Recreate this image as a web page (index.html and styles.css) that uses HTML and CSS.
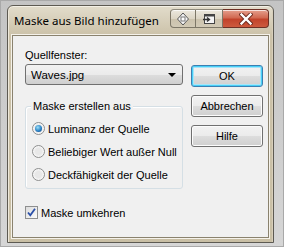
FILE: index.html
```html
<!DOCTYPE html>
<html lang="de">
<head>
  <meta charset="UTF-8" />
  <title>Maske aus Bild hinzufügen</title>
  <link rel="stylesheet" href="styles.css">
</head>
<body>
  <div class="window">
    <div class="titlebar">
      <span class="title">Maske aus Bild hinzufügen</span>
      <div class="caption-buttons">
        <div class="cap-btn cap-move">
          <svg width="14" height="14" viewBox="0 0 14 14">
            <path d="M7 1 L12.5 7 L7 13 L1.5 7 Z" fill="#f4f4f4" stroke="#555" stroke-width="1"/>
            <rect x="5" y="5" width="4" height="4" fill="#fff" stroke="#777" stroke-width="1"/>
          </svg>
        </div>
        <div class="cap-btn cap-roll">
          <svg width="14" height="12" viewBox="0 0 14 12">
            <rect x="2.5" y="1.5" width="10" height="9" fill="#f4f4f4" stroke="#444" stroke-width="1"/>
            <rect x="2.5" y="1.5" width="10" height="2" fill="#444"/>
            <path d="M1 6.5 H7 M5 4.5 L7.5 6.5 L5 8.5" fill="none" stroke="#333" stroke-width="1.3"/>
          </svg>
        </div>
        <div class="cap-btn cap-close">
          <svg width="14" height="12" viewBox="0 0 14 12">
            <path d="M2.5 1.5 L11.5 10.5 M11.5 1.5 L2.5 10.5" stroke="#6b2a1e" stroke-width="4.2" stroke-linecap="square"/>
            <path d="M2.5 1.5 L11.5 10.5 M11.5 1.5 L2.5 10.5" stroke="#fff" stroke-width="2.4" stroke-linecap="square"/>
          </svg>
        </div>
      </div>
    </div>

    <div class="client">
      <div class="main">
        <div class="left-col">
          <div class="field-label">Quellfenster:</div>
          <div class="select">
            <span>Waves.jpg</span>
            <span class="select-arrow"></span>
          </div>

          <div class="group">
            <div class="group-legend">Maske erstellen aus</div>
            <div class="option">
              <span class="radio checked"></span>
              <span>Luminanz der Quelle</span>
            </div>
            <div class="option">
              <span class="radio"></span>
              <span>Beliebiger Wert außer Null</span>
            </div>
            <div class="option">
              <span class="radio"></span>
              <span>Deckfähigkeit der Quelle</span>
            </div>
          </div>
        </div>

        <div class="btn-col">
          <div class="btn btn-default">OK</div>
          <div class="btn">Abbrechen</div>
          <div class="btn">Hilfe</div>
        </div>
      </div>

      <div class="check-row">
        <span class="checkbox">
          <svg width="9" height="9" viewBox="0 0 9 9">
            <path d="M1 4.5 L3.3 7.3 L8 0.8" fill="none" stroke="#2a4fa8" stroke-width="1.8"/>
          </svg>
        </span>
        <span>Maske umkehren</span>
      </div>
    </div>
  </div>
</body>
</html>
```

FILE: styles.css
```css
html, body {
  margin: 0;
  padding: 0;
}

body {
  width: 284px;
  height: 247px;
  box-sizing: border-box;
  background: linear-gradient(#c4c4c4, #d6d6d6);
  border: 1px solid #a9a9a9;
  padding: 4px 9px 3px 6px;
  font-family: "Liberation Sans", Tahoma, sans-serif;
  font-size: 11px;
  color: #000;
  white-space: nowrap;
}

.window {
  height: 100%;
  box-sizing: border-box;
  border: 1px solid #5d5a52;
  border-radius: 6px 6px 0 0;
  background: linear-gradient(#e2dccb, #cbc1a8 30px, #c9bfa5);
  padding: 0 4px 4px 4px;
  display: flex;
  flex-direction: column;
  box-shadow: inset 0 1px 0 #f4f0e6, inset 1px 0 0 #eee8da, inset -1px 0 0 #d8cfbb;
}

/* barra de titulo */
.titlebar {
  height: 29px;
  display: flex;
  align-items: flex-start;
  justify-content: space-between;
}

.title {
  font-family: "Noto Sans", "Open Sans", sans-serif;
  font-size: 11.5px;
  color: #000;
  margin-top: 7px;
  margin-left: 2px;
}

.caption-buttons {
  display: flex;
  margin-top: 3px;
}

.cap-btn {
  height: 17px;
  display: flex;
  align-items: center;
  justify-content: center;
  border: 1px solid #7d7767;
  border-top-color: #8f8a7c;
  background: linear-gradient(#ece8de, #dcd5c4 50%, #cbc2ac 51%, #d2cab6);
  box-shadow: inset 0 1px 0 rgba(255, 255, 255, 0.7);
}

.cap-move {
  width: 24px;
  border-radius: 4px 0 0 4px;
}

.cap-roll {
  width: 26px;
  border-left: none;
}

.cap-close {
  width: 45px;
  border-left: none;
  border-color: #6e3025;
  border-radius: 0 4px 4px 0;
  background: linear-gradient(#e5a08e, #d26a52 45%, #c2432b 55%, #cd5a3e);
}

/* area cliente */
.client {
  flex: 1;
  background: #f0f0f0;
  border: 1px solid #8a826e;
  box-shadow: 0 0 0 1px #f5f2ea;
  padding: 5px 5px 0 12px;
  display: flex;
  flex-direction: column;
}

.main {
  display: flex;
  gap: 8px;
}

.left-col {
  width: 159px;
  display: flex;
  flex-direction: column;
}

.field-label {
  height: 14px;
  line-height: 14px;
  margin-top: 7px;
  margin-bottom: 2px;
}

.select {
  height: 19px;
  width: 145px;
  border: 1px solid #707070;
  border-radius: 3px;
  background: linear-gradient(#f2f2f2, #ebebeb 50%, #dddddd 51%, #cfcfcf);
  display: flex;
  align-items: center;
  justify-content: space-between;
  padding: 0 6px 0 5px;
  font-size: 11.5px;
}

.select-arrow {
  width: 0;
  height: 0;
  border-left: 4px solid transparent;
  border-right: 4px solid transparent;
  border-top: 4px solid #000;
}

.group {
  margin-top: 21px;
  height: 71px;
  border: 1px solid #d5dfe5;
  border-radius: 3px;
  box-shadow: inset 1px 1px 0 #fff;
  position: relative;
  padding: 10px 0 0 6px;
}

.group-legend {
  position: absolute;
  top: -8px;
  left: 5px;
  padding: 0 2px;
  background: #f0f0f0;
  line-height: 14px;
}

.option {
  display: flex;
  align-items: center;
  gap: 3px;
  height: 23px;
}

.radio {
  width: 11px;
  height: 11px;
  border-radius: 50%;
  border: 1px solid #8e8f8f;
  background: radial-gradient(circle at 50% 50%, #e8e8e8 40%, #f8f8f8 70%);
  position: relative;
}

.radio.checked::after {
  content: "";
  position: absolute;
  left: 2px;
  top: 2px;
  width: 7px;
  height: 7px;
  border-radius: 50%;
  background: radial-gradient(circle at 40% 35%, #9ce0f8, #2b83c6 55%, #0b3b7a);
}

.btn-col {
  display: flex;
  flex-direction: column;
  gap: 8px;
  margin-top: 24px;
}

.btn {
  width: 70px;
  height: 20px;
  border: 1px solid #707070;
  border-radius: 3px;
  background: linear-gradient(#f2f2f2, #ebebeb 50%, #dddddd 51%, #cfcfcf);
  box-shadow: inset 0 0 0 1px #fcfcfc;
  display: flex;
  align-items: center;
  justify-content: center;
}

.btn-default {
  border-color: #3c7fb1;
  box-shadow: inset 0 0 0 1px #48d0f8, inset 0 0 0 2px #a8e4f8;
}

.check-row {
  display: flex;
  align-items: center;
  gap: 3px;
  margin-top: 17px;
}

.checkbox {
  width: 11px;
  height: 11px;
  border: 1px solid #8e8f8f;
  background: linear-gradient(135deg, #dcdcdc, #fbfbfb);
  display: flex;
  align-items: center;
  justify-content: center;
}
```
